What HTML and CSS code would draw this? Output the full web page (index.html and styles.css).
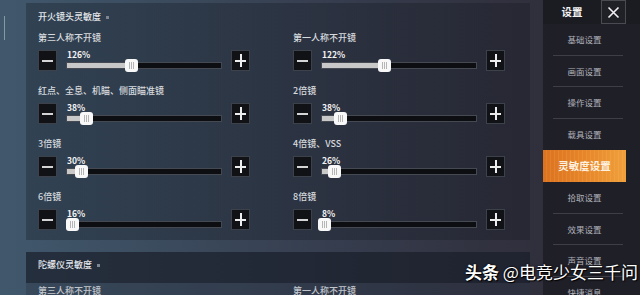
FILE: index.html
```html
<!DOCTYPE html>
<html lang="zh">
<head>
<meta charset="utf-8">
<title>灵敏度设置</title>
<link rel="stylesheet" href="styles.css">
</head>
<body>
<div class="screen">
  <span class="edge-mark"></span>
  <main class="content">
    <section class="panel fire">
      <h2 class="panel-title">开火镜头灵敏度<span class="dot"></span></h2>
      <div class="grid">
        <div class="setting">
          <div class="label">第三人称不开镜</div>
          <div class="slider">
            <span class="btn minus"></span>
            <div class="track-wrap">
              <span class="pct">126%</span>
              <div class="track"><div class="fill" style="width:64px"></div></div>
              <span class="thumb" style="left:58px"></span>
            </div>
            <span class="btn plus"></span>
          </div>
        </div>
        <div class="setting">
          <div class="label">第一人称不开镜</div>
          <div class="slider">
            <span class="btn minus"></span>
            <div class="track-wrap">
              <span class="pct">122%</span>
              <div class="track"><div class="fill" style="width:62px"></div></div>
              <span class="thumb" style="left:56px"></span>
            </div>
            <span class="btn plus"></span>
          </div>
        </div>
        <div class="setting">
          <div class="label">红点、全息、机瞄、侧面瞄准镜</div>
          <div class="slider">
            <span class="btn minus"></span>
            <div class="track-wrap">
              <span class="pct">38%</span>
              <div class="track"><div class="fill" style="width:19px"></div></div>
              <span class="thumb" style="left:13px"></span>
            </div>
            <span class="btn plus"></span>
          </div>
        </div>
        <div class="setting">
          <div class="label">2倍镜</div>
          <div class="slider">
            <span class="btn minus"></span>
            <div class="track-wrap">
              <span class="pct">38%</span>
              <div class="track"><div class="fill" style="width:18px"></div></div>
              <span class="thumb" style="left:12px"></span>
            </div>
            <span class="btn plus"></span>
          </div>
        </div>
        <div class="setting">
          <div class="label">3倍镜</div>
          <div class="slider">
            <span class="btn minus"></span>
            <div class="track-wrap">
              <span class="pct">30%</span>
              <div class="track"><div class="fill" style="width:14px"></div></div>
              <span class="thumb" style="left:8px"></span>
            </div>
            <span class="btn plus"></span>
          </div>
        </div>
        <div class="setting">
          <div class="label">4倍镜、VSS</div>
          <div class="slider">
            <span class="btn minus"></span>
            <div class="track-wrap">
              <span class="pct">26%</span>
              <div class="track"><div class="fill" style="width:12px"></div></div>
              <span class="thumb" style="left:6px"></span>
            </div>
            <span class="btn plus"></span>
          </div>
        </div>
        <div class="setting">
          <div class="label">6倍镜</div>
          <div class="slider">
            <span class="btn minus"></span>
            <div class="track-wrap">
              <span class="pct">16%</span>
              <div class="track"><div class="fill" style="width:5px"></div></div>
              <span class="thumb" style="left:-1px"></span>
            </div>
            <span class="btn plus"></span>
          </div>
        </div>
        <div class="setting">
          <div class="label">8倍镜</div>
          <div class="slider">
            <span class="btn minus"></span>
            <div class="track-wrap">
              <span class="pct">8%</span>
              <div class="track"><div class="fill" style="width:2px"></div></div>
              <span class="thumb" style="left:-4px"></span>
            </div>
            <span class="btn plus"></span>
          </div>
        </div>
      </div>
    </section>
    <section class="panel gyro">
      <div class="gyro-head">
        <h2 class="panel-title">陀螺仪灵敏度<span class="dot"></span></h2>
      </div>
      <div class="grid gyro-grid">
        <div class="label">第三人称不开镜</div>
        <div class="label">第一人称不开镜</div>
      </div>
    </section>
  </main>
  <aside class="sidebar">
    <div class="side-head">
      <span class="side-title">设置</span>
      <span class="close">
        <svg width="13" height="13" viewBox="0 0 13 13"><path d="M1.5 1.5 L11.5 11.5 M11.5 1.5 L1.5 11.5" stroke="#f2f2f2" stroke-width="1.6" fill="none"/></svg>
      </span>
    </div>
    <ul class="menu">
      <li class="item">基础设置</li>
      <li class="item">画面设置</li>
      <li class="item">操作设置</li>
      <li class="item no-line">载具设置</li>
      <li class="item active">灵敏度设置</li>
      <li class="item">拾取设置</li>
      <li class="item">效果设置</li>
      <li class="item">声音设置</li>
      <li class="item">快捷消息</li>
    </ul>
  </aside>
  <div class="watermark"><b>头条</b> @电竞少女三千问</div>
</div>
</body>
</html>
```

FILE: styles.css
```css
* { box-sizing: border-box; margin: 0; padding: 0; }
html, body { width: 640px; height: 295px; overflow: hidden; }
body {
  font-family: "Noto Sans CJK SC", "Noto Sans", "Liberation Sans", sans-serif;
  background: #2e2f3b;
}
.screen {
  position: relative;
  width: 640px;
  height: 295px;
  display: flex;
  overflow: hidden;
  background: linear-gradient(90deg, #41586c 0%, #3c4d60 22%, #363e4f 50%, #31313f 78%, #2d2c37 100%);
}
.edge-mark {
  position: absolute;
  left: 4px;
  top: 16px;
  width: 1px;
  height: 24px;
  background: rgba(220, 230, 240, 0.45);
}
.content {
  margin-left: 26px;
  width: 504px;
  padding-top: 3px;
  display: flex;
  flex-direction: column;
  gap: 12px;
}
.panel {
  background: linear-gradient(90deg, rgba(28, 38, 50, 0.42), rgba(26, 28, 38, 0.4));
}
.fire {
  height: 237px;
  flex: none;
  padding: 7px 0 0 12px;
}
.panel-title {
  display: flex;
  align-items: center;
  height: 14px;
  font-size: 9px;
  line-height: 14px;
  font-weight: 500;
  color: #e4e8ec;
}
.dot {
  width: 3px;
  height: 3px;
  margin-left: 5px;
  background: #7c8591;
}
.grid {
  display: grid;
  grid-template-columns: 212px 212px;
  column-gap: 43px;
  margin-top: 7px;
}
.setting { height: 53px; }
.label {
  height: 14px;
  font-size: 9px;
  line-height: 14px;
  font-weight: 500;
  color: #d6dade;
  white-space: nowrap;
}
.slider {
  display: flex;
  align-items: flex-start;
  gap: 10px;
  height: 21px;
  margin-top: 5px;
}
.btn {
  position: relative;
  flex: none;
  width: 19px;
  height: 21px;
  background: #101216;
  border: 1px solid #3d4149;
}
.btn::before {
  content: "";
  position: absolute;
  left: 3px;
  right: 3px;
  top: 9px;
  height: 2px;
  background: #d4d4d4;
}
.plus::before { background: #ededed; }
.plus::after {
  content: "";
  position: absolute;
  left: 8px;
  top: 3px;
  bottom: 3px;
  width: 2px;
  background: #ededed;
}
.track-wrap {
  position: relative;
  flex: none;
  width: 154px;
  height: 21px;
}
.pct {
  display: block;
  height: 9px;
  font-size: 8.5px;
  line-height: 9px;
  font-weight: bold;
  color: #f4f4f4;
}
.track {
  height: 5px;
  margin-top: 4px;
  background: #0c0e12;
  box-shadow: 0 0 0 1px #454952;
}
.fill {
  height: 100%;
  background: #c8c8c8;
}
.thumb {
  position: absolute;
  top: 9px;
  width: 13px;
  height: 13px;
  border-radius: 3px;
  background:
    linear-gradient(90deg, transparent 4px, #b5b5b5 4px, #b5b5b5 5px, transparent 5px, transparent 6px, #b5b5b5 6px, #b5b5b5 7px, transparent 7px, transparent 8px, #b5b5b5 8px, #b5b5b5 9px, transparent 9px) center / 100% 7px no-repeat,
    #f8f8f8;
}
.gyro {
  flex: 1;
  background: rgba(40, 48, 62, 0.35);
}
.gyro-head {
  height: 31px;
  padding: 6px 0 0 12px;
  background: rgba(22, 26, 36, 0.55);
}
.gyro-grid {
  margin-top: 1px;
  padding-left: 12px;
}
.gyro-grid .label { color: #c0c5cc; }
.sidebar {
  flex: none;
  width: 97px;
  margin-left: 13px;
  display: flex;
  flex-direction: column;
  background: rgba(30, 30, 38, 0.88);
}
.side-head {
  display: flex;
  height: 24px;
  background: #1b1b22;
}
.side-title {
  width: 58px;
  text-align: center;
  font-size: 10.5px;
  line-height: 24px;
  font-weight: bold;
  color: #f2f2f2;
}
.close {
  display: flex;
  align-items: center;
  justify-content: center;
  width: 25px;
  height: 24px;
  border: 1px solid #4a4a53;
  background: #202027;
}
.menu {
  list-style: none;
  width: 83px;
}
.item {
  position: relative;
  height: 31.5px;
  text-align: center;
  font-size: 8.5px;
  line-height: 31.5px;
  color: #b0b2ba;
}
.item::after {
  content: "";
  position: absolute;
  left: 10px;
  right: 3px;
  bottom: 0;
  height: 1px;
  background: rgba(120, 120, 130, 0.35);
}
.item.no-line::after, .item.active::after { display: none; }
.item.active {
  height: 32px;
  line-height: 32px;
  font-size: 10.5px;
  font-weight: bold;
  color: #fff1e0;
  background:
    repeating-linear-gradient(90deg, rgba(255, 210, 120, 0) 0px, rgba(255, 210, 120, 0) 3px, rgba(255, 215, 130, 0.12) 3px, rgba(255, 215, 130, 0.12) 4px),
    linear-gradient(90deg, #dc721f 0%, #e6862a 50%, #f0a03c 100%);
}
.watermark {
  position: absolute;
  left: 465px;
  top: 261px;
  font-size: 17px;
  line-height: 22px;
  color: #ffffff;
  white-space: nowrap;
  text-shadow: 0 0 2px #000, 1px 1px 1px #000;
}
.watermark b { font-weight: bold; }
```
